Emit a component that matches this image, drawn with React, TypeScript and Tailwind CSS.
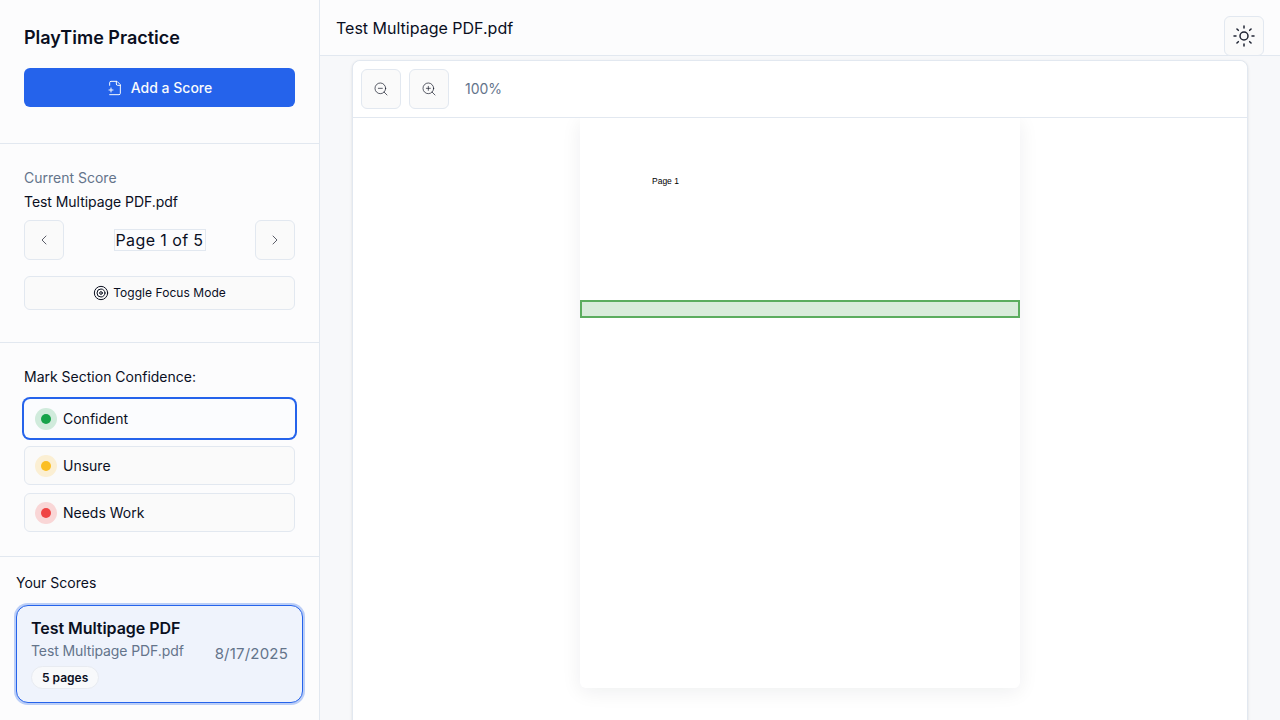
import React from 'react';
import { ChevronLeft, ChevronRight, Sun, Target, ZoomIn, ZoomOut } from 'lucide-react';

const font = { fontFamily: 'Inter, "Noto Sans", sans-serif' };

const FileAddIcon = () => (
  <svg width="16" height="16" viewBox="0 0 24 24" fill="none" stroke="currentColor" strokeWidth="1.5" strokeLinecap="round" strokeLinejoin="round">
    <path d="M4 22h14a2 2 0 0 0 2-2V7l-5-5H6a2 2 0 0 0-2 2v4" />
    <path d="M14 2v4a2 2 0 0 0 2 2h4" />
    <path d="M3 15h6" />
    <path d="M6 12v6" />
  </svg>
);

const ConfidenceButton: React.FC<{ label: string; ring: string; dot: string; active?: boolean }> = ({ label, ring, dot, active }) => (
  <button
    className={`h-[39px] w-full flex items-center gap-1.5 px-[10px] rounded-md text-sm text-[#0a0f1f] border ${
      active ? 'border-transparent ring-2 ring-[#2563eb] bg-[#fbfcfe]' : 'border-[#e2e8f0] bg-[#fafafa]'
    }`}
  >
    <span className={`w-[22px] h-[22px] rounded-full flex items-center justify-center ${ring}`}>
      <span className={`w-[10px] h-[10px] rounded-full ${dot}`} />
    </span>
    {label}
  </button>
);

const IconButton: React.FC<{ children: React.ReactNode }> = ({ children }) => (
  <button className="w-10 h-10 shrink-0 flex items-center justify-center rounded-md border border-[#e2e8f0] bg-[#fafafa] text-[#0a0f1f]">
    {children}
  </button>
);

export default function App() {
  return (
    <div className="flex h-[720px] w-[1280px] overflow-hidden bg-[#f7f8fa] text-[#0a0f1f]" style={font}>
      <aside className="w-[320px] shrink-0 flex flex-col bg-[#fcfcfd] border-r border-[#e2e8f0]">
        <div className="h-[144px] shrink-0 px-6 pt-6 border-b border-[#e2e8f0]">
          <h1 className="text-lg leading-7 font-semibold">PlayTime Practice</h1>
          <button className="mt-4 h-[39px] w-full flex items-center justify-center gap-2 rounded-md bg-[#2563eb] text-sm font-medium text-[#f8fafc]">
            <FileAddIcon />
            Add a Score
          </button>
        </div>

        <div className="h-[199px] shrink-0 px-6 pt-6 border-b border-[#e2e8f0]">
          <p className="text-sm leading-5 text-[#64748b]">Current Score</p>
          <p className="mt-1 text-sm leading-5 tracking-[-0.05px]">Test Multipage PDF.pdf</p>
          <div className="mt-2 flex items-center justify-between">
            <IconButton><ChevronLeft size={16} strokeWidth={1} /></IconButton>
            <span className="h-[22px] flex items-center border border-[#e2e8f0] text-base tracking-[0.4px] leading-none px-px">Page 1 of 5</span>
            <IconButton><ChevronRight size={16} strokeWidth={1} /></IconButton>
          </div>
          <button className="mt-4 h-[34px] w-full flex items-center justify-center gap-1 rounded-md border border-[#e2e8f0] bg-[#fafafa] text-xs font-normal tracking-[0.05px]">
            <Target size={16} strokeWidth={1.5} />
            Toggle Focus Mode
          </button>
        </div>

        <div className="h-[214px] shrink-0 px-6 pt-6 border-b border-[#e2e8f0]">
          <p className="text-sm leading-5">Mark Section Confidence:</p>
          <div className="mt-3 flex flex-col gap-2">
            <ConfidenceButton label="Confident" ring="bg-[#d0ebdc]" dot="bg-[#16a34a]" active />
            <ConfidenceButton label="Unsure" ring="bg-[#fbefd3]" dot="bg-[#fbbf24]" />
            <ConfidenceButton label="Needs Work" ring="bg-[#f9d6d6]" dot="bg-[#ef4444]" />
          </div>
        </div>

        <div className="flex-1 px-4 pt-4">
          <p className="text-sm leading-5">Your Scores</p>
          <div className="mt-3 h-[98px] w-[287px] rounded-xl border border-[#2563eb] bg-[#eff3fc] ring-2 ring-[#2563eb]/30 px-[14px] pt-[10px]">
            <p className="text-base leading-6 font-semibold tracking-[-0.05px]">Test Multipage PDF</p>
            <div className="flex justify-between items-end">
              <p className="mt-px text-sm leading-5 text-[#64748b] tracking-[-0.1px]">Test Multipage PDF.pdf</p>
              <p className="text-[15px] leading-5 text-[#64748b] tracking-[0.2px] -mb-[3px]">8/17/2025</p>
            </div>
            <span className="mt-[5px] inline-flex h-[23px] items-center rounded-full border border-[#e8ebf1] bg-[#f8f9fb] px-[10px] text-xs font-semibold">5 pages</span>
          </div>
        </div>
      </aside>

      <main className="relative flex-1 min-w-0 flex flex-col">
        <header className="h-[56px] shrink-0 flex items-center px-4 bg-[#fcfcfd] border-b border-[#e2e8f0]">
          <h2 className="text-base">Test Multipage PDF.pdf</h2>
        </header>
        <button className="absolute right-4 top-4 w-10 h-10 flex items-center justify-center rounded-md border border-[#e2e8f0] bg-[#fafafa] text-[#1f2433]">
          <Sun size={24} strokeWidth={1.5} />
        </button>

        <div className="flex-1 min-h-0 px-8 pt-1">
          <div className="h-[700px] w-[896px] rounded-t-lg border border-[#e2e8f0] bg-white shadow-sm">
            <div className="relative z-10 h-[57px] flex items-center gap-2 px-2 bg-white rounded-t-lg border-b border-[#e2e8f0]">
              <IconButton><ZoomOut size={16} strokeWidth={1} /></IconButton>
              <IconButton><ZoomIn size={16} strokeWidth={1} /></IconButton>
              <span className="ml-2 text-sm text-[#64748b]">100%</span>
            </div>
            <div className="flex justify-center">
              <div className="relative w-[440px] h-[570px] bg-white rounded-b-md shadow-[0_4px_20px_rgba(15,23,42,0.07)] pt-[57px] pl-[72px]">
                <p className="text-[8.5px] leading-3 text-black" style={{ fontFamily: '"Liberation Sans", Arial, sans-serif' }}>Page 1</p>
                <div className="absolute left-0 right-0 top-[182px] h-[18px] border-2 border-[#5cad5f] bg-[#d9ecdb]" />
              </div>
            </div>
          </div>
        </div>
      </main>
    </div>
  );
}
